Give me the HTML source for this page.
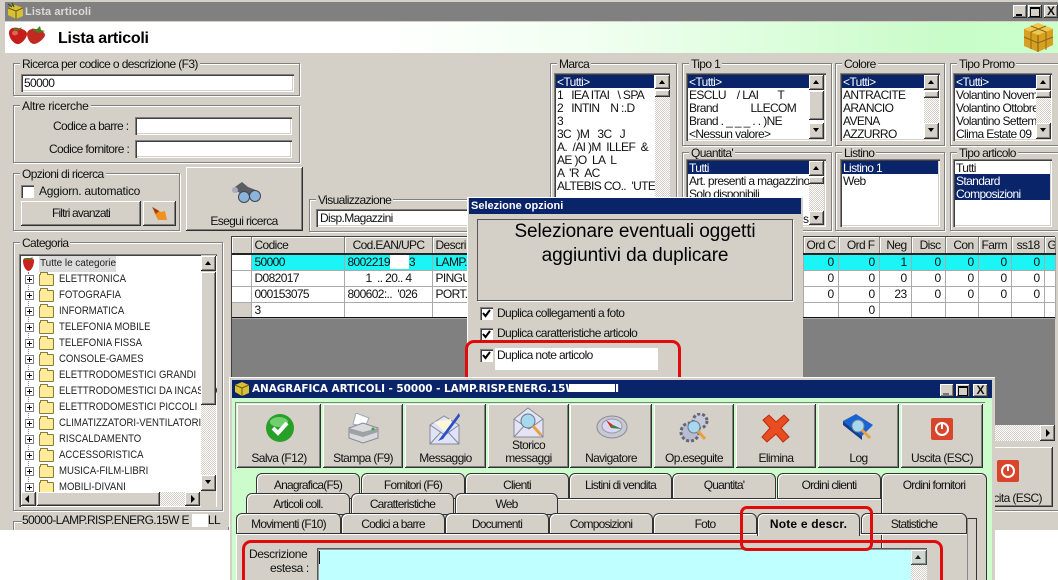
<!DOCTYPE html>
<html><head><meta charset="utf-8"><style>
html,body{margin:0;padding:0;background:#fff;overflow:hidden;width:1058px;height:580px}
body{position:relative;font:12px/13px "Liberation Sans",Arial,sans-serif;letter-spacing:-.62px;color:#111}
div,span,svg,table{position:absolute}
td span{position:static}
.t{white-space:nowrap}
.g{border:1px solid #808080;box-shadow:1px 1px 0 #fff,inset 1px 1px 0 #fff;box-sizing:border-box}
.l{background:#d4d0c8;padding:0 2px;white-space:nowrap;left:6px;top:-6px}
.s{background:#fff;box-sizing:border-box;box-shadow:inset 1px 1px #808080,inset 2px 2px #404040,inset -1px -1px #fff,inset -2px -2px #d4d0c8}
.b{background:#d4d0c8;box-sizing:border-box;box-shadow:inset -1px -1px #303030,inset 1px 1px #fff,inset -2px -2px #808080}
.sel{background:#0a246a;color:#fff}
.h{background:repeating-conic-gradient(#fff 0 25%,#d4d0c8 0 50%) 0 0/2px 2px}
.li{left:2px;right:2px;height:14px;box-sizing:border-box;padding-top:1px;line-height:13px;white-space:nowrap;overflow:hidden;padding-left:1px}
.li.sel{height:13px}
.up:after,.dn:after{content:"";position:absolute;left:4px;border:3.5px solid transparent}
.up:after{top:2px;border-bottom:4px solid #000}
.dn:after{top:5px;border-top:4px solid #000}
.tab{box-sizing:border-box;background:#d4d0c8;border:1px solid #333;border-radius:6px 6px 0 0;box-shadow:inset 1px 1px #fff;text-align:center;line-height:23px;white-space:nowrap;letter-spacing:-.8px}
.tr{left:0;height:16px}
.fo{width:13px;height:10px;background:#ffeb9a;border:1px solid #8a7c3c;border-radius:1px}
.fo:before{content:"";position:absolute;left:0;top:-3px;width:6px;height:2px;background:#ffeb9a;border:1px solid #8a7c3c;border-bottom:0}
.pl{width:7px;height:7px;border:1px solid #808080;background:#fff}
.pl:before{content:"";position:absolute;left:1px;top:3px;width:5px;height:1px;background:#000}
.pl:after{content:"";position:absolute;left:3px;top:1px;width:1px;height:5px;background:#000}
.ca{font-size:11px;letter-spacing:0;color:#222;white-space:nowrap;top:2px;transform-origin:0 0;transform:scaleX(.87)}
.c{background:#fff;box-sizing:border-box;width:13px;height:13px;box-shadow:inset 1px 1px #808080,inset 2px 2px #404040,inset -1px -1px #fff}
.w{background:#fff}
table{border-collapse:collapse;table-layout:fixed;background:#fff}
td{height:15px;padding:0 2px 0 3px;border-right:1px solid #aaa;border-bottom:1px solid #aaa;overflow:hidden;white-space:nowrap;font-size:12px;line-height:15px;box-sizing:border-box}
td.n{text-align:right;padding-right:4px}
tr.hd td{background:#d4d0c8;border-right:1px solid #808080;border-bottom:2px solid #222;height:17px;box-shadow:inset 1px 1px #fff}
td.i{background:#fff}
.wb{top:5px;width:14px;height:13px}
.red{border:3px solid #e00c0c;box-sizing:border-box;border-radius:9px}
.cap{left:0;right:0;text-align:center;white-space:nowrap}
</style></head><body>
<div style="left:0;top:0;width:1058px;height:580px;overflow:hidden">
<!-- main window -->
<div style="left:0;top:0;width:1058px;height:530px;background:#d4d0c8"></div>
<div style="left:5px;top:2px;width:1053px;height:19px;background:#808080"></div>
<div class="t" style="left:25px;top:6px;color:#dcdad4;font-weight:bold;font-size:11px;letter-spacing:.1px">Lista articoli</div>
<svg style="left:7px;top:3px" width="17" height="17" viewBox="0 0 17 17"><path d="M1 5l7-3 8 3v8l-7 3-8-4z" fill="#d8c030"/><path d="M1 5l8 3 7-3M9 8v8" stroke="#6a5a10" fill="none"/><path d="M1 1l4 3M5 0l2 4" stroke="#284a10"/></svg>
<div class="b wb" style="left:1013px;top:5px;width:14px"><div style="left:3px;top:9px;width:6px;height:2px;background:#000"></div></div>
<div class="b wb" style="left:1028px;top:5px;width:14px"><div style="left:2px;top:2px;width:8px;height:7px;border:1px solid #000;border-top-width:2px"></div></div>
<div class="b wb" style="left:1044px;top:5px;width:14px;font:bold 12px/13px 'Liberation Sans';text-align:center;letter-spacing:0">X</div>
<div style="left:5px;top:22px;width:1053px;height:31px;background:linear-gradient(90deg,#fff 0,#fff 35%,#f2fff2 55%,#c8fcc8 90%,#ccffcc 100%)"></div>
<svg style="left:8px;top:25px" width="38" height="21" viewBox="0 0 38 21"><path d="M1 8c0-5 5-6 9-5s9 2 9 6-6 11-10 10S1 13 1 8z" fill="#c41e1a"/><path d="M19 9c0-4 5-6 9-5s9 3 9 6-7 9-11 9-7-6-7-10z" fill="#c02a20"/><ellipse cx="7" cy="8" rx="3" ry="2.500" fill="#e86050"/><path d="M24 3l4 2 4-4 1 4 4 1-6 2-5-2zM5 3l5 1 4-2-2 3-5 1z" fill="#4a7c20"/></svg>
<div class="t" style="left:58px;top:30px;font-size:16px;line-height:17px;font-weight:bold;letter-spacing:-.25px;color:#000">Lista articoli</div>
<svg style="left:1023px;top:22px" width="31" height="31" viewBox="0 0 31 31"><path d="M15 1l15 6v16l-15 7-14-6V7z" fill="#d8a020"/><path d="M15 1l15 6-15 6L1 7z" fill="#f0c850"/><path d="M15 13v17" stroke="#7a5a10"/><path d="M1 15l14 6 15-6M8 4l15 6v18M23 4L8 10v17" stroke="#8a6a18" fill="none"/></svg>

<!-- search groups -->
<div class="g" style="left:13px;top:63px;width:287px;height:33px"><span class="l">Ricerca per codice o descrizione (F3)</span></div>
<div class="s" style="left:21px;top:74px;width:273px;height:18px"><span class="t" style="left:3px;top:3px">50000</span></div>
<div class="g" style="left:13px;top:105px;width:287px;height:58px"><span class="l" style="letter-spacing:-.3px">Altre ricerche</span></div>
<div class="t" style="left:53px;top:120px">Codice a barre :</div>
<div class="s" style="left:135px;top:117px;width:157px;height:18px"></div>
<div class="t" style="left:49px;top:143px">Codice fornitore :</div>
<div class="s" style="left:135px;top:140px;width:157px;height:18px"></div>
<div class="g" style="left:13px;top:173px;width:167px;height:58px"><span class="l">Opzioni di ricerca</span></div>
<div class="c" style="left:21px;top:185px"></div>
<div class="t" style="left:39px;top:185px;letter-spacing:-.3px">Aggiorn. automatico</div>
<div class="b" style="left:21px;top:201px;width:120px;height:25px"><span class="cap" style="top:6px;letter-spacing:-.85px">Filtri avanzati</span></div>
<div class="b" style="left:143px;top:201px;width:33px;height:25px"><svg style="left:8px;top:5px" width="18" height="16" viewBox="0 0 18 16"><path d="M2 1l8 5 4-1 2 9H7L3 6z" fill="#f09020"/><path d="M1 1l7 4-3 3z" fill="#a03818"/></svg></div>
<div class="b" style="left:186px;top:167px;width:117px;height:64px"><svg style="left:44px;top:14px" width="32" height="22" viewBox="0 0 32 22"><path d="M2 8L12 1l6 5 10 4-4 4-14-2z" fill="#5a5e64"/><circle cx="14" cy="16" r="5.500" fill="#8ab4dc" stroke="#40464c"/><circle cx="25" cy="15" r="5.500" fill="#8ab4dc" stroke="#40464c"/><circle cx="5" cy="9" r="3" fill="#aab"/></svg><span class="cap" style="top:48px;left:-1px">Esegui ricerca</span></div>
<div class="g" style="left:309px;top:199px;width:165px;height:33px"><span class="l">Visualizzazione</span></div>
<div class="s" style="left:316px;top:209px;width:155px;height:18px"><span class="t" style="left:4px;top:3px">Disp.Magazzini</span></div>

<!-- Marca -->
<div class="g" style="left:550px;top:63px;width:127px;height:168px"><span class="l">Marca</span></div>
<div class="s" style="left:554px;top:73px;width:116px;height:154px">
<div class="li sel" style="top:2px;width:98px;right:auto">&lt;Tutti&gt;</div>
<div class="li" style="top:15px">1 &nbsp;&nbsp;IEA ITAI &nbsp;&nbsp;\ SPA</div>
<div class="li" style="top:28px">2 &nbsp;&nbsp;INTIN &nbsp;&nbsp;&nbsp;N :.D</div>
<div class="li" style="top:41px">3</div>
<div class="li" style="top:54px">3C &nbsp;)M &nbsp;&nbsp;3C &nbsp;&nbsp;J</div>
<div class="li" style="top:67px">A. &nbsp;/AI )M &nbsp;ILLEF &nbsp;&amp;</div>
<div class="li" style="top:80px">AE )O &nbsp;LA &nbsp;L</div>
<div class="li" style="top:93px">A &nbsp;'R &nbsp;AC</div>
<div class="li" style="top:106px">ALTEBIS CO.. &nbsp;'UTE</div>
<div class="b up" style="left:101px;top:2px;width:15px;height:14px"></div>
<div class="b" style="left:101px;top:17px;width:15px;height:7px"></div>
<div class="h" style="left:101px;top:24px;width:15px;height:120px"></div>
</div>
<!-- Tipo 1 -->
<div class="g" style="left:682px;top:63px;width:150px;height:83px"><span class="l">Tipo 1</span></div>
<div class="s" style="left:686px;top:73px;width:140px;height:68px">
<div class="li sel" style="top:2px;width:121px;right:auto">&lt;Tutti&gt;</div>
<div class="li" style="top:15px">ESCLU&nbsp;&nbsp;&nbsp;&nbsp;/ LAI &nbsp;&nbsp;&nbsp;&nbsp;&nbsp;&nbsp;T</div>
<div class="li" style="top:28px">Brand &nbsp;&nbsp;&nbsp;&nbsp;&nbsp;&nbsp;&nbsp;&nbsp;&nbsp;&nbsp;&nbsp;LLECOM</div>
<div class="li" style="top:41px">Brand . _ _ _ . . )NE</div>
<div class="li" style="top:54px">&lt;Nessun valore&gt;</div>
<div class="b up" style="left:123px;top:2px;width:15px;height:15px"></div>
<div class="b" style="left:123px;top:18px;width:15px;height:29px"></div>
<div class="b dn" style="left:123px;top:50px;width:15px;height:16px"></div>
</div>
<!-- Colore -->
<div class="g" style="left:835px;top:63px;width:110px;height:83px"><span class="l">Colore</span></div>
<div class="s" style="left:840px;top:73px;width:100px;height:68px">
<div class="li sel" style="top:2px;width:82px;right:auto">&lt;Tutti&gt;</div>
<div class="li" style="top:15px">ANTRACITE</div><div class="li" style="top:28px">ARANCIO</div>
<div class="li" style="top:41px">AVENA</div><div class="li" style="top:54px">AZZURRO</div>
<div class="b up" style="left:84px;top:2px;width:15px;height:15px"></div>
<div class="b" style="left:84px;top:18px;width:15px;height:7px"></div>
<div class="h" style="left:84px;top:25px;width:15px;height:25px"></div>
<div class="b dn" style="left:84px;top:50px;width:15px;height:16px"></div>
</div>
<!-- Tipo promo -->
<div class="g" style="left:950px;top:63px;width:120px;height:83px"><span class="l">Tipo Promo</span></div>
<div class="s" style="left:953px;top:73px;width:99px;height:68px">
<div class="li sel" style="top:2px;width:81px;right:auto">&lt;Tutti&gt;</div>
<div class="li" style="top:15px;right:15px">Volantino Novem</div><div class="li" style="top:28px;right:15px">Volantino Ottobre</div>
<div class="li" style="top:41px;right:15px">Volantino Settem</div><div class="li" style="top:54px;right:15px">Clima Estate 09</div>
<div class="b up" style="left:83px;top:2px;width:15px;height:15px"></div>
<div class="b" style="left:83px;top:18px;width:15px;height:7px"></div>
<div class="h" style="left:83px;top:25px;width:15px;height:25px"></div>
<div class="b dn" style="left:83px;top:50px;width:15px;height:16px"></div>
</div>
<!-- Quantita -->
<div class="g" style="left:682px;top:152px;width:150px;height:79px"><span class="l">Quantita'</span></div>
<div class="s" style="left:686px;top:159px;width:140px;height:68px">
<div class="li sel" style="top:2px;width:121px;right:auto">Tutti</div>
<div class="li" style="top:15px;right:16px">Art. presenti a magazzino</div>
<div class="li" style="top:28px;right:16px">Solo disponibili</div>
<div class="t" style="left:117px;top:54px">s.</div>
<div class="b up" style="left:123px;top:2px;width:15px;height:15px"></div>
<div class="b" style="left:123px;top:18px;width:15px;height:7px"></div>
<div class="h" style="left:123px;top:25px;width:15px;height:27px"></div>
<div class="b dn" style="left:123px;top:52px;width:15px;height:14px"></div>
</div>
<!-- Listino -->
<div class="g" style="left:835px;top:152px;width:110px;height:79px"><span class="l">Listino</span></div>
<div class="s" style="left:840px;top:159px;width:100px;height:68px">
<div class="li sel" style="top:2px">Listino 1</div><div class="li" style="top:15px">Web</div></div>
<!-- Tipo articolo -->
<div class="g" style="left:950px;top:152px;width:120px;height:79px"><span class="l">Tipo articolo</span></div>
<div class="s" style="left:953px;top:159px;width:99px;height:68px">
<div class="li" style="top:2px">Tutti</div><div class="li sel" style="top:15px">Standard</div><div class="li sel" style="top:28px">Composizioni</div></div>

<!-- Categoria -->
<div class="g" style="left:13px;top:242px;width:210px;height:269px"><span class="l">Categoria</span></div>
<div class="s" style="left:19px;top:254px;width:198px;height:253px;overflow:hidden">
<svg style="left:3px;top:1px" width="13" height="17" viewBox="0 0 13 17"><path d="M1 6c0-3 3-3 5.500-3S12 3 12 6c0 5-3 10-5.500 10S1 11 1 6z" fill="#c8221e"/><path d="M2 3l4 1 5-2-2 3H3z" fill="#4a7c20"/></svg>
<div class="t" style="left:20px;top:2px;width:76px;height:16px;background:#dcdcdc;font-size:10px;line-height:16px;letter-spacing:-.05px;padding-left:1px;color:#222">Tutte le categorie</div>
<div style="left:9px;top:18px;width:0;height:240px;border-left:1px dotted #888"></div>
<div class="tr" style="top:17px"><div class="pl" style="left:6px;top:4px"></div><div class="fo" style="left:20px;top:3px"></div><div class="ca" style="left:40px">ELETTRONICA</div></div>
<div class="tr" style="top:33px"><div class="pl" style="left:6px;top:4px"></div><div class="fo" style="left:20px;top:3px"></div><div class="ca" style="left:40px">FOTOGRAFIA</div></div>
<div class="tr" style="top:49px"><div class="pl" style="left:6px;top:4px"></div><div class="fo" style="left:20px;top:3px"></div><div class="ca" style="left:40px">INFORMATICA</div></div>
<div class="tr" style="top:65px"><div class="pl" style="left:6px;top:4px"></div><div class="fo" style="left:20px;top:3px"></div><div class="ca" style="left:40px">TELEFONIA MOBILE</div></div>
<div class="tr" style="top:81px"><div class="pl" style="left:6px;top:4px"></div><div class="fo" style="left:20px;top:3px"></div><div class="ca" style="left:40px">TELEFONIA FISSA</div></div>
<div class="tr" style="top:97px"><div class="pl" style="left:6px;top:4px"></div><div class="fo" style="left:20px;top:3px"></div><div class="ca" style="left:40px">CONSOLE-GAMES</div></div>
<div class="tr" style="top:113px"><div class="pl" style="left:6px;top:4px"></div><div class="fo" style="left:20px;top:3px"></div><div class="ca" style="left:40px">ELETTRODOMESTICI GRANDI</div></div>
<div class="tr" style="top:129px"><div class="pl" style="left:6px;top:4px"></div><div class="fo" style="left:20px;top:3px"></div><div class="ca" style="left:40px">ELETTRODOMESTICI DA INCASSO</div></div>
<div class="tr" style="top:145px"><div class="pl" style="left:6px;top:4px"></div><div class="fo" style="left:20px;top:3px"></div><div class="ca" style="left:40px">ELETTRODOMESTICI PICCOLI</div></div>
<div class="tr" style="top:161px"><div class="pl" style="left:6px;top:4px"></div><div class="fo" style="left:20px;top:3px"></div><div class="ca" style="left:40px">CLIMATIZZATORI-VENTILATORI</div></div>
<div class="tr" style="top:177px"><div class="pl" style="left:6px;top:4px"></div><div class="fo" style="left:20px;top:3px"></div><div class="ca" style="left:40px">RISCALDAMENTO</div></div>
<div class="tr" style="top:193px"><div class="pl" style="left:6px;top:4px"></div><div class="fo" style="left:20px;top:3px"></div><div class="ca" style="left:40px">ACCESSORISTICA</div></div>
<div class="tr" style="top:209px"><div class="pl" style="left:6px;top:4px"></div><div class="fo" style="left:20px;top:3px"></div><div class="ca" style="left:40px">MUSICA-FILM-LIBRI</div></div>
<div class="tr" style="top:225px"><div class="pl" style="left:6px;top:4px"></div><div class="fo" style="left:20px;top:3px"></div><div class="ca" style="left:40px">MOBILI-DIVANI</div></div>
<div style="left:182px;top:1px;width:15px;height:252px;background:#d4d0c8"></div>
<div class="b up" style="left:182px;top:2px;width:15px;height:15px"></div>
<div class="b" style="left:182px;top:18px;width:15px;height:133px"></div>
<div class="h" style="left:182px;top:151px;width:15px;height:70px"></div>
<div class="b dn" style="left:182px;top:221px;width:15px;height:16px"></div>
<div style="left:2px;top:238px;width:195px;height:14px;background:#d4d0c8"></div>
<div class="b" style="left:2px;top:238px;width:15px;height:14px"><div style="left:4px;top:3px;border:4px solid transparent;border-right:4px solid #000;border-left:0"></div></div>
<div class="b" style="left:18px;top:238px;width:123px;height:14px"></div>
<div class="h" style="left:141px;top:238px;width:25px;height:14px"></div>
<div class="b" style="left:166px;top:238px;width:15px;height:14px"><div style="left:6px;top:3px;border:4px solid transparent;border-left:4px solid #000;border-right:0"></div></div>
</div>
<div class="g" style="left:13px;top:521px;width:216px;height:30px;border-bottom:0"></div>
<div class="t" style="left:22px;top:514px;background:#d4d0c8;padding-right:2px;width:205px;overflow:hidden">50000-LAMP.RISP.ENERG.15W E&nbsp;<span style="position:static;background:#fff">&nbsp;&nbsp;&nbsp;&nbsp;&nbsp;&nbsp;</span>LL</div>
<div style="left:0;top:530px;width:229px;height:50px;background:#fff"></div>

<!-- Grid -->
<div style="left:231px;top:236px;width:824px;height:190px;background:#808080;box-shadow:inset 1px 1px #404040"></div>
<table style="left:232px;top:237px;width:823px"><colgroup><col style="width:19px"><col style="width:93px"><col style="width:88px"><col style="width:371px"><col style="width:35px"><col style="width:41px"><col style="width:32px"><col style="width:34px"><col style="width:33px"><col style="width:33px"><col style="width:33px"><col style="width:11px"></colgroup>
<tr class="hd"><td></td><td>Codice</td><td style="text-align:center">Cod.EAN/UPC</td><td>Descri</td><td class="n">Ord C</td><td class="n">Ord F</td><td class="n">Neg</td><td class="n">Disc</td><td class="n">Con</td><td class="n">Farm</td><td class="n">ss18</td><td>G</td></tr>
<tr style="background:#1cf5f5"><td class="i"></td><td>50000</td><td>8002219<span style="background:#fff">&nbsp;&nbsp;&nbsp;&nbsp;&nbsp;&nbsp;&nbsp;</span>3</td><td>LAMP.</td><td class="n">0</td><td class="n">0</td><td class="n">1</td><td class="n">0</td><td class="n">0</td><td class="n">0</td><td class="n">0</td><td></td></tr>
<tr><td class="i"></td><td>D082017</td><td style="text-align:center">1 &nbsp;.. 20.. 4</td><td>PINGU</td><td class="n">0</td><td class="n">0</td><td class="n">0</td><td class="n">0</td><td class="n">0</td><td class="n">0</td><td class="n">0</td><td></td></tr>
<tr><td class="i"></td><td>000153075</td><td>800602:.. &nbsp;'026</td><td>PORT.</td><td class="n">0</td><td class="n">0</td><td class="n">23</td><td class="n">0</td><td class="n">0</td><td class="n">0</td><td class="n">0</td><td></td></tr>
<tr><td class="i" style="background:#d4d0c8"></td><td>3</td><td></td><td></td><td></td><td class="n">0</td><td></td><td></td><td></td><td></td><td></td><td></td></tr>
</table>
<div style="left:232px;top:317px;width:823px;height:1px;background:#111"></div>
<div class="h" style="left:995px;top:425px;width:46px;height:16px"></div>
<div class="b" style="left:1040px;top:425px;width:15px;height:16px"><div style="left:6px;top:4px;border:4px solid transparent;border-left:4px solid #000;border-right:0"></div></div>
<div style="left:995px;top:441px;width:63px;height:89px;background:#d4d0c8"></div>
<div class="b" style="left:980px;top:447px;width:73px;height:60px"><svg style="left:17px;top:13px" width="22" height="22" viewBox="0 0 22 22"><rect x="0" y="0" width="22" height="22" rx="2" fill="#d8452a"/><circle cx="11" cy="11" r="6" fill="none" stroke="#fff" stroke-width="2"/><path d="M11 6v5" stroke="#fff" stroke-width="2"/></svg><span class="t" style="left:0;top:45px">Uscita (ESC)</span></div>
<div style="left:995px;top:510px;width:63px;height:1px;background:#808080"></div>
<div style="left:995px;top:511px;width:63px;height:1px;background:#fff"></div>

<!-- Dialog -->
<div style="left:467px;top:197px;width:336px;height:181px;background:#d4d0c8;box-shadow:inset 1px 1px #fff"></div>
<div style="left:469px;top:198px;width:332px;height:16px;background:#0a246a;color:#fff;font-weight:bold;font-size:11px;line-height:17px;letter-spacing:0;padding-left:2px;box-sizing:border-box">Selezione opzioni</div>
<div class="g" style="left:477px;top:219px;width:316px;height:82px;border-color:#555;box-shadow:1px 1px 0 #fff"></div>
<div class="t" style="left:477px;top:220px;width:316px;text-align:center;font-size:19px;line-height:24px;letter-spacing:-.1px;color:#000">Selezionare eventuali oggetti<br>aggiuntivi da duplicare</div>
<div class="c" style="left:480px;top:307px"><svg style="left:2px;top:2px" width="9" height="9" viewBox="0 0 9 9"><path d="M1 4l2.500 3L8 1" fill="none" stroke="#000" stroke-width="2"/></svg></div>
<div class="t" style="left:497px;top:307px">Duplica collegamenti a foto</div>
<div class="c" style="left:480px;top:328px"><svg style="left:2px;top:2px" width="9" height="9" viewBox="0 0 9 9"><path d="M1 4l2.500 3L8 1" fill="none" stroke="#000" stroke-width="2"/></svg></div>
<div class="t" style="left:497px;top:327px">Duplica caratteristiche articolo</div>
<div class="w" style="left:495px;top:348px;width:163px;height:22px"></div>
<div class="c" style="left:480px;top:349px"><svg style="left:2px;top:2px" width="9" height="9" viewBox="0 0 9 9"><path d="M1 4l2.500 3L8 1" fill="none" stroke="#000" stroke-width="2"/></svg></div>
<div class="t" style="left:497px;top:349px">Duplica note articolo</div>
<div class="red" style="left:465px;top:340px;width:216px;height:60px"></div>

<!-- Anagrafica window -->
<div style="left:229px;top:377px;width:766px;height:203px;background:#d4d0c8;box-shadow:inset 1px 1px #fff"></div>
<div style="left:232px;top:380px;width:760px;height:18px;background:#0a246a"></div>
<svg style="left:234px;top:381px" width="16" height="16" viewBox="0 0 16 16"><path d="M1 4l7-3 7 3v8l-7 3-7-4z" fill="#d8c030"/><path d="M1 4l7 3 7-3M8 7v8" stroke="#6a5a10" fill="none"/></svg>
<div class="t" style="left:252px;top:382px;color:#fff;font:bold 11px/14px 'DejaVu Sans','Liberation Sans',sans-serif;letter-spacing:-.05px;transform-origin:0 0;transform:scaleX(.95)">ANAGRAFICA ARTICOLI - 50000 - LAMP.RISP.ENERG.15W</div>
<div class="w" style="left:569px;top:384px;width:46px;height:8px"></div>
<div class="t" style="left:615px;top:382px;color:#fff;font:bold 11px/14px 'DejaVu Sans',sans-serif">I</div>
<div class="b wb" style="left:940px;top:384px;width:14px"><div style="left:3px;top:9px;width:6px;height:2px;background:#777"></div></div>
<div class="b wb" style="left:956px;top:384px;width:14px"><div style="left:2px;top:2px;width:8px;height:7px;border:1px solid #000;border-top-width:2px"></div></div>
<div class="b wb" style="left:973px;top:384px;width:15px;font:bold 12px/13px 'Liberation Sans';text-align:center;letter-spacing:0">X</div>
<div style="left:232px;top:398px;width:760px;height:182px;background:#ccfccc"></div>
<div style="left:235px;top:402px;width:750px;height:1px;background:#808080"></div>
<div style="left:235px;top:402px;width:1px;height:67px;background:#808080"></div>

<div class="b" style="left:237px;top:404px;width:84px;height:64px"><svg style="left:29px;top:10px" width="28" height="28" viewBox="0 0 28 28"><circle cx="14" cy="14" r="14" fill="#28a028"/><ellipse cx="13" cy="8" rx="9" ry="5" fill="#70d070"/><path d="M7 14l5 5 9-10" stroke="#fff" stroke-width="4" fill="none"/></svg><span class="cap" style="top:48px">Salva (F12)</span></div>
<div class="b" style="left:323px;top:404px;width:80px;height:64px"><svg style="left:24px;top:9px" width="32" height="31" viewBox="0 0 32 31"><path d="M9 0l13 5-4 9-12-3z" fill="#fff" stroke="#9ab"/><path d="M2 15l14-5 15 5v10l-15 5L2 25z" fill="#d8dadc" stroke="#889"/><path d="M2 15l14 4 15-4v4l-15 5-14-4z" fill="#9ea2a6"/><circle cx="26" cy="16" r="1.500" fill="#3a3"/></svg><span class="cap" style="top:48px">Stampa (F9)</span></div>
<div class="b" style="left:405px;top:404px;width:81px;height:64px"><svg style="left:24px;top:9px" width="32" height="32" viewBox="0 0 32 32"><path d="M1 12L15 3l15 9v19H1z" fill="#dfe3f8" stroke="#889"/><path d="M1 12l15 10 14-10M1 31l11-12M30 31L19 19" stroke="#889" fill="none"/><path d="M5 9l17-3v8l-6 5z" fill="#fdf7d8"/><path d="M30 0L12 24l-3 4 5-2L31 3z" fill="#2a4ec8"/></svg><span class="cap" style="top:48px">Messaggio</span></div>
<div class="b" style="left:488px;top:404px;width:81px;height:64px"><svg style="left:25px;top:3px" width="32" height="32" viewBox="0 0 32 32"><path d="M1 12L15 1l15 11v18H1z" fill="#e4e4f4" stroke="#889"/><path d="M1 12l15 10 14-10M1 30l10-11M30 30L20 19" stroke="#889" fill="none"/><circle cx="15" cy="14" r="7" fill="#a8d8f0" stroke="#678"/><path d="M20 19l8 9" stroke="#e8a040" stroke-width="3"/></svg><span class="cap" style="top:35px">Storico<br>messaggi</span></div>
<div class="b" style="left:570px;top:404px;width:82px;height:64px"><svg style="left:26px;top:11px" width="32" height="24" viewBox="0 0 32 24"><ellipse cx="16" cy="12" rx="15" ry="11" fill="#c8c8d0" stroke="#889"/><ellipse cx="16" cy="11" rx="10" ry="7" fill="#d8d8f4" stroke="#99a"/><path d="M10 5l7 5-2 3z" fill="#c83020"/><path d="M17 10l9 4-11-1z" fill="#308838"/></svg><span class="cap" style="top:48px">Navigatore</span></div>
<div class="b" style="left:654px;top:404px;width:80px;height:64px"><svg style="left:24px;top:9px" width="32" height="31" viewBox="0 0 32 31"><circle cx="12" cy="19" r="9" fill="#b8bcd0" stroke="#667" stroke-width="3" stroke-dasharray="3 2"/><circle cx="22" cy="8" r="7" fill="#c4c8d8" stroke="#667" stroke-width="3" stroke-dasharray="3 2"/><circle cx="16" cy="14" r="6" fill="#a8d8f0" stroke="#678"/><path d="M20 18l7 8" stroke="#e8a040" stroke-width="3"/></svg><span class="cap" style="top:48px">Op.eseguite</span></div>
<div class="b" style="left:736px;top:404px;width:80px;height:64px"><svg style="left:25px;top:10px" width="29" height="29" viewBox="0 0 29 29"><path d="M2 6l6-5 7 7 8-7 5 5-8 8 8 9-6 5-7-8-9 8-5-5 8-9z" fill="#e84c20" stroke="#b83010"/></svg><span class="cap" style="top:48px">Elimina</span></div>
<div class="b" style="left:818px;top:404px;width:81px;height:64px"><svg style="left:24px;top:9px" width="32" height="32" viewBox="0 0 32 32"><path d="M1 8L14 1l17 11-11 11z" fill="#1a62d0"/><path d="M1 8l19 15v4L1 12z" fill="#103e90"/><circle cx="16" cy="13" r="6" fill="#a8d8f0" stroke="#789"/><path d="M20 17l8 8" stroke="#e8a040" stroke-width="3"/></svg><span class="cap" style="top:48px">Log</span></div>
<div class="b" style="left:901px;top:404px;width:82px;height:64px"><svg style="left:30px;top:14px" width="22" height="22" viewBox="0 0 22 22"><rect x="0" y="0" width="22" height="22" rx="2" fill="#d8452a"/><circle cx="11" cy="11" r="6" fill="none" stroke="#fff" stroke-width="2"/><path d="M11 6v5" stroke="#fff" stroke-width="2"/></svg><span class="cap" style="top:48px">Uscita (ESC)</span></div>

<!-- Tabs -->
<div class="tab" style="left:881px;top:473px;width:106px;height:107px;line-height:23px;border-bottom:0">Ordini fornitori</div>
<div class="tab" style="left:256px;top:473px;width:104px;height:26px">Anagrafica(F5)</div>
<div class="tab" style="left:361px;top:473px;width:104px;height:26px">Fornitori (F6)</div>
<div class="tab" style="left:465px;top:473px;width:104px;height:26px">Clienti</div>
<div class="tab" style="left:569px;top:473px;width:103px;height:26px">Listini di vendita</div>
<div class="tab" style="left:672px;top:473px;width:104px;height:26px">Quantita'</div>
<div class="tab" style="left:777px;top:473px;width:104px;height:26px">Ordini clienti</div>
<div style="left:246px;top:499px;width:635px;height:16px;background:#d4d0c8"></div>
<div style="left:236px;top:515px;width:645px;height:65px;background:#d4d0c8"></div>
<div style="left:558px;top:499px;width:323px;height:1px;background:#fff"></div>
<div class="tab" style="left:246px;top:493px;width:104px;height:22px;line-height:20px">Articoli coll.</div>
<div class="tab" style="left:351px;top:493px;width:103px;height:22px;line-height:20px">Caratteristiche</div>
<div class="tab" style="left:455px;top:493px;width:103px;height:22px;line-height:20px">Web</div>
<div style="left:967px;top:518px;width:10px;height:62px;box-sizing:border-box;border:1px solid #333;border-left-color:#888;border-bottom:0"></div>
<div class="tab" style="left:236px;top:513px;width:105px;height:21px;line-height:20px">Movimenti (F10)</div>
<div class="tab" style="left:341px;top:513px;width:104px;height:21px;line-height:20px">Codici a barre</div>
<div class="tab" style="left:445px;top:513px;width:104px;height:21px;line-height:20px">Documenti</div>
<div class="tab" style="left:549px;top:513px;width:104px;height:21px;line-height:20px">Composizioni</div>
<div class="tab" style="left:653px;top:513px;width:104px;height:21px;line-height:20px">Foto</div>
<div class="tab" style="left:861px;top:513px;width:106px;height:21px;line-height:20px">Statistiche</div>
<div style="left:236px;top:534px;width:731px;height:1px;background:#fff"></div>
<div style="left:236px;top:534px;width:1px;height:46px;background:#fff"></div>
<div class="tab" style="left:757px;top:513px;width:103px;height:23px;line-height:21px;font-weight:bold;border-bottom:0;letter-spacing:.2px;color:#000">Note e descr.</div>
<div class="t" style="left:249px;top:548px;letter-spacing:-.4px">Descrizione</div>
<div class="t" style="left:270px;top:562px;letter-spacing:-.4px">estesa :</div>
<div style="left:317px;top:548px;width:610px;height:32px;background:#bfffff;box-shadow:inset 1px 1px #555,inset 2px 2px #999"></div>
<div style="left:319px;top:551px;width:1px;height:13px;background:#111"></div>
<div class="b up" style="left:911px;top:550px;width:16px;height:15px;opacity:.85"></div>
<div class="h" style="left:911px;top:565px;width:16px;height:15px"></div>
<div class="red" style="left:740px;top:506px;width:133px;height:45px;border-radius:7px"></div>
<div class="red" style="left:242px;top:540px;width:701px;height:60px;border-width:3px 3px 0 3px"></div>
</div>
</body></html>
